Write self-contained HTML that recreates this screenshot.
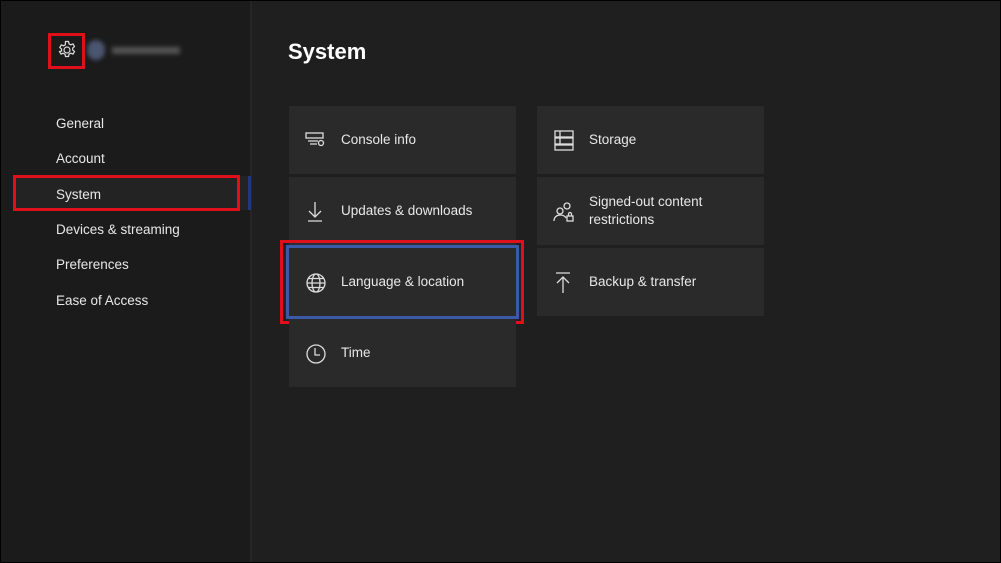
<!DOCTYPE html><html><head><style>
body{margin:0;width:1001px;height:563px;background:#000;font-family:"Liberation Sans",sans-serif;overflow:hidden;position:relative}
.side{position:absolute;left:1px;top:1px;width:249px;height:561px;background:#1b1b1b}
.main{position:absolute;left:252px;top:1px;width:748px;height:561px;background:#1f1f1f}
.div{position:absolute;left:250px;top:1px;width:2px;height:561px;background:#262626}
.nav{position:absolute;left:56px;color:#e8e8e8;font-size:13.5px}
.t{position:absolute;width:227px;height:68px;background:#2a2a2a;color:#e8e8e8;font-size:13.5px}
.t span{position:absolute;left:52px;top:50%;transform:translateY(-50%);line-height:18px}
.t svg{position:absolute;left:16px;top:24px}
.red{position:absolute;border:3px solid #e0101a;box-sizing:border-box}
</style></head><body>
<div class="side"></div><div class="div"></div><div class="main"></div>
<svg style="position:absolute;left:57px;top:40px" width="20" height="20" viewBox="0 0 20 20" fill="none" stroke="#ddd" stroke-width="1.2"><circle cx="10" cy="10" r="3"/><path d="M8.5 1.5h3l.5 2.3 1.8 1 2.2-.9 1.5 2.6-1.8 1.5v2l1.8 1.5-1.5 2.6-2.2-.9-1.8 1-.5 2.3h-3l-.5-2.3-1.8-1-2.2.9-1.5-2.6L4.6 11V9L2.8 7.5l1.5-2.6 2.2.9 1.8-1z"/></svg>
<div class="red" style="left:48px;top:33px;width:37px;height:36px"></div>
<div style="position:absolute;left:87px;top:40px;width:18px;height:20px;border-radius:50%;background:#4a5570;filter:blur(2px)"></div>
<div style="position:absolute;left:112px;top:47px;width:68px;height:7px;background:#555;filter:blur(2.5px)"></div>
<div class="nav" style="top:116px">General</div>
<div class="nav" style="top:151px">Account</div>
<div style="position:absolute;left:14px;top:176px;width:236px;height:34px;background:#232323"></div>
<div class="nav" style="top:187px">System</div>
<div style="position:absolute;left:248px;top:176px;width:3px;height:34px;background:#1e3a7a"></div>
<div class="red" style="left:13px;top:175px;width:227px;height:36px"></div>
<div class="nav" style="top:222px">Devices &amp; streaming</div>
<div class="nav" style="top:257px">Preferences</div>
<div class="nav" style="top:293px">Ease of Access</div>
<div style="position:absolute;left:288px;top:39px;color:#fff;font-size:22px;font-weight:bold">System</div>
<div class="t" style="left:289px;top:106px"><svg width="22" height="20" viewBox="0 0 22 20" fill="none" stroke="#ddd" stroke-width="1.3"><rect x="1" y="3" width="17" height="5"/><path d="M3 11h10M5 14h7"/><circle cx="16" cy="13" r="2.5"/></svg><span>Console info</span></div>
<div class="t" style="left:289px;top:177px"><svg width="20" height="22" viewBox="0 0 20 22" fill="none" stroke="#ddd" stroke-width="1.3"><path d="M10 1v15M4 10l6 6 6-6M3 20h14"/></svg><span>Updates &amp; downloads</span></div>
<div class="t" style="left:289px;top:248px;outline:3px solid #3a5aa8;box-shadow:0 0 6px #3a5aa8"><svg width="22" height="22" viewBox="0 0 22 22" fill="none" stroke="#ddd" stroke-width="1.3"><circle cx="11" cy="11" r="9"/><ellipse cx="11" cy="11" rx="4" ry="9"/><path d="M2 11h18M3.5 6.5h15M3.5 15.5h15"/></svg><span>Language &amp; location</span></div>
<div class="red" style="left:280px;top:240px;width:244px;height:84px"></div>
<div class="t" style="left:289px;top:319px"><svg width="22" height="22" viewBox="0 0 22 22" fill="none" stroke="#ddd" stroke-width="1.3"><circle cx="11" cy="11" r="9"/><path d="M10 5v7h5"/></svg><span>Time</span></div>
<div class="t" style="left:537px;top:106px"><svg width="22" height="22" viewBox="0 0 22 22" fill="none" stroke="#ddd" stroke-width="1.3"><rect x="2" y="1" width="18" height="6"/><rect x="2" y="8" width="18" height="6"/><rect x="2" y="15" width="18" height="5"/><path d="M7 1v13"/></svg><span>Storage</span></div>
<div class="t" style="left:537px;top:177px"><svg width="22" height="22" viewBox="0 0 22 22" fill="none" stroke="#ddd" stroke-width="1.3"><circle cx="14" cy="5" r="3"/><circle cx="7" cy="10" r="3"/><path d="M1 20c0-4 3-6 6-6s5 1 6 3"/><rect x="14" y="15" width="6" height="5"/><path d="M15.5 15v-2a1.5 1.5 0 013 0v2"/></svg><span>Signed-out content<br>restrictions</span></div>
<div class="t" style="left:537px;top:248px"><svg width="20" height="22" viewBox="0 0 20 22" fill="none" stroke="#ddd" stroke-width="1.3"><path d="M3 1h14M10 21V5M4 11l6-6 6 6"/></svg><span>Backup &amp; transfer</span></div>
</body></html>
